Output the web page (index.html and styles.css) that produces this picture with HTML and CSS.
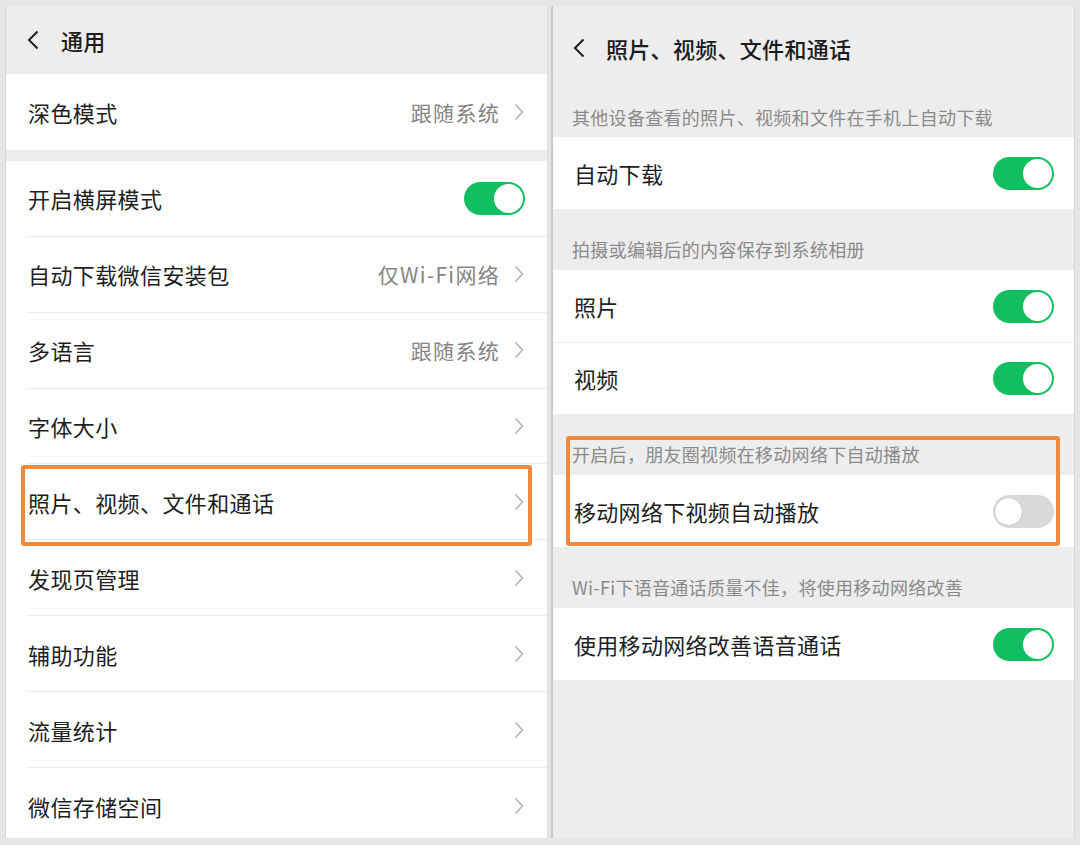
FILE: index.html
```html
<!DOCTYPE html>
<html lang="zh-CN">
<head>
<meta charset="utf-8">
<title>通用 / 照片、视频、文件和通话</title>
<link rel="stylesheet" href="styles.css">
</head>
<body>
<div class="frame">
  <section class="panel panel-left">
    <header class="nav nav-left">
      <svg class="back" viewBox="0 0 12 20" width="12" height="20"><path d="M10.5 1.5 L2 10 L10.5 18.5" fill="none" stroke="#1f1f1f" stroke-width="2"/></svg>
      <span class="nav-title">通用</span>
    </header>
    <div class="group">
      <div class="lrow"><div class="lrow-in"><span class="label">深色模式</span><span class="value">跟随系统</span><svg class="chev" viewBox="0 0 10 18" width="10" height="18"><path d="M1.5 1.5 L8.5 9 L1.5 16.5" fill="none" stroke="#b3b3b3" stroke-width="1.6"/></svg></div></div>
    </div>
    <div class="gap"></div>
    <div class="group group-main">
      <div class="lrow"><div class="lrow-in"><span class="label">开启横屏模式</span><span class="switch on"><span class="knob"></span></span></div></div>
      <div class="lrow"><div class="lrow-in"><span class="label">自动下载微信安装包</span><span class="value">仅Wi-Fi网络</span><svg class="chev" viewBox="0 0 10 18" width="10" height="18"><path d="M1.5 1.5 L8.5 9 L1.5 16.5" fill="none" stroke="#b3b3b3" stroke-width="1.6"/></svg></div></div>
      <div class="lrow"><div class="lrow-in"><span class="label">多语言</span><span class="value">跟随系统</span><svg class="chev" viewBox="0 0 10 18" width="10" height="18"><path d="M1.5 1.5 L8.5 9 L1.5 16.5" fill="none" stroke="#b3b3b3" stroke-width="1.6"/></svg></div></div>
      <div class="lrow"><div class="lrow-in"><span class="label">字体大小</span><svg class="chev" viewBox="0 0 10 18" width="10" height="18"><path d="M1.5 1.5 L8.5 9 L1.5 16.5" fill="none" stroke="#b3b3b3" stroke-width="1.6"/></svg></div></div>
      <div class="lrow"><div class="lrow-in"><span class="label">照片、视频、文件和通话</span><svg class="chev" viewBox="0 0 10 18" width="10" height="18"><path d="M1.5 1.5 L8.5 9 L1.5 16.5" fill="none" stroke="#b3b3b3" stroke-width="1.6"/></svg></div></div>
      <div class="lrow"><div class="lrow-in"><span class="label">发现页管理</span><svg class="chev" viewBox="0 0 10 18" width="10" height="18"><path d="M1.5 1.5 L8.5 9 L1.5 16.5" fill="none" stroke="#b3b3b3" stroke-width="1.6"/></svg></div></div>
      <div class="lrow"><div class="lrow-in"><span class="label">辅助功能</span><svg class="chev" viewBox="0 0 10 18" width="10" height="18"><path d="M1.5 1.5 L8.5 9 L1.5 16.5" fill="none" stroke="#b3b3b3" stroke-width="1.6"/></svg></div></div>
      <div class="lrow"><div class="lrow-in"><span class="label">流量统计</span><svg class="chev" viewBox="0 0 10 18" width="10" height="18"><path d="M1.5 1.5 L8.5 9 L1.5 16.5" fill="none" stroke="#b3b3b3" stroke-width="1.6"/></svg></div></div>
      <div class="lrow"><div class="lrow-in"><span class="label">微信存储空间</span><svg class="chev" viewBox="0 0 10 18" width="10" height="18"><path d="M1.5 1.5 L8.5 9 L1.5 16.5" fill="none" stroke="#b3b3b3" stroke-width="1.6"/></svg></div></div>
    </div>
  </section>

  <section class="panel panel-right">
    <header class="nav nav-right">
      <svg class="back" viewBox="0 0 12 20" width="12" height="20"><path d="M10.5 1.5 L2 10 L10.5 18.5" fill="none" stroke="#1f1f1f" stroke-width="2"/></svg>
      <span class="nav-title">照片、视频、文件和通话</span>
    </header>
    <div class="sec-label first">其他设备查看的照片、视频和文件在手机上自动下载</div>
    <div class="group">
      <div class="rrow"><span class="label">自动下载</span><span class="switch on"><span class="knob"></span></span></div>
    </div>
    <div class="sec-label">拍摄或编辑后的内容保存到系统相册</div>
    <div class="group">
      <div class="rrow"><span class="label">照片</span><span class="switch on"><span class="knob"></span></span></div>
      <div class="rrow sep"><span class="label">视频</span><span class="switch on"><span class="knob"></span></span></div>
    </div>
    <div class="sec-label">开启后，朋友圈视频在移动网络下自动播放</div>
    <div class="group">
      <div class="rrow"><span class="label">移动网络下视频自动播放</span><span class="switch off"><span class="knob"></span></span></div>
    </div>
    <div class="sec-label">Wi-Fi下语音通话质量不佳，将使用移动网络改善</div>
    <div class="group">
      <div class="rrow"><span class="label">使用移动网络改善语音通话</span><span class="switch on"><span class="knob"></span></span></div>
    </div>
  </section>

  <div class="highlight hl-left"></div>
  <div class="highlight hl-right"></div>
</div>
</body>
</html>
```
FILE: styles.css
```css
* { box-sizing: border-box; }
html, body { margin: 0; padding: 0; }
body {
  width: 1080px;
  height: 845px;
  background: #e7e5e5;
  font-family: "Noto Sans CJK SC", "Noto Sans", sans-serif;
  color: #1e1e1e;
  overflow: hidden;
}
.frame {
  position: relative;
  display: flex;
  gap: 2px;
  padding: 6px 5px 7px 5px;
  height: 845px;
}
.panel {
  background: #ededed;
  display: flex;
  flex-direction: column;
  overflow: hidden;
}
.panel-left {
  width: 544px;
  border-left: 1px solid #d6d4d4;
  border-right: 2px solid #e3e1e1;
}
.panel-right {
  flex: 1;
  border-left: 2px solid #c9c7c7;
  border-right: 1px solid #d8d6d6;
}
.nav {
  display: flex;
  align-items: center;
  background: #ededed;
  flex: none;
}
.nav-left { height: 68px; padding-left: 21px; }
.nav-right { height: 77px; padding-left: 20px; padding-top: 6px; }
.back { flex: none; }
.nav-title {
  font-size: 22px;
  font-weight: 500;
  color: #1c1c1c;
  margin-left: 22px;
  letter-spacing: 0.3px;
}
.nav-right .nav-title { margin-left: 21px; }
.group { background: #fff; flex: none; }
.gap { height: 11px; flex: none; }
.group-main { flex: 1; }
.lrow { height: 75.9px; padding-left: 21px; }
.lrow-in {
  height: 100%;
  display: flex;
  align-items: center;
  padding-right: 23px;
  border-bottom: 1px solid #ececec;
  padding-left: 1px;
}
.group-main .lrow:last-child .lrow-in, .group:first-of-type .lrow-in { border-bottom: none; }
.label {
  font-size: 22px;
  flex: 1;
  color: #1e1e1e;
  letter-spacing: 0.4px;
}
.value {
  font-size: 21px;
  color: #858585;
  margin-right: 14px;
  letter-spacing: 1.3px;
}
.chev { flex: none; }
.lrow .switch { margin-right: -1px; }
.switch {
  flex: none;
  width: 61px;
  height: 33px;
  border-radius: 17px;
  position: relative;
}
.switch.on { background: #11bf61; }
.switch.off { background: #d9d9d9; }
.knob {
  position: absolute;
  top: 2px;
  width: 29px;
  height: 29px;
  border-radius: 50%;
  background: #fff;
}
.switch.on .knob { right: 2px; }
.switch.off .knob { left: 1px; border: 1px solid #c8c8c8; top: 2px; }
.sec-label {
  height: 61px;
  padding: 28px 0 0 19px;
  font-size: 18px;
  color: #8a8a8a;
  line-height: 24px;
  flex: none;
  letter-spacing: 0.3px;
}
.sec-label.first { height: 54px; padding-top: 22px; }
.rrow {
  height: 72px;
  display: flex;
  align-items: center;
  padding: 0 20px 0 21px;
  background: #fff;
}
.rrow.sep { box-shadow: inset 0 1px 0 #ececec; }
.rrow .label { letter-spacing: 0.3px; }
.highlight {
  position: absolute;
  border: 4px solid #f08a3c;
  border-radius: 3px;
  pointer-events: none;
}
.hl-left { left: 21px; top: 465px; width: 511px; height: 81px; }
.hl-right { left: 566px; top: 436px; width: 494px; height: 110px; }
```
